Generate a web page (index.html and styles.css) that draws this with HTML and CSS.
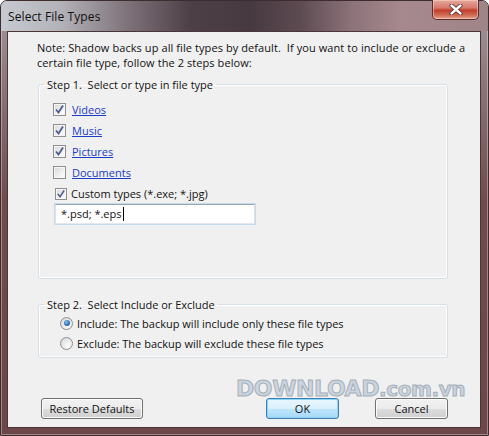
FILE: index.html
```html
<!DOCTYPE html>
<html>
<head>
<meta charset="utf-8">
<link rel="stylesheet" href="styles.css">
</head>
<body>
<div class="window">
  <div class="titlebar">
    <span class="title">Select File Types</span>
    <span class="close"><svg width="14" height="11" viewBox="0 0 14 11"><path d="M2.5 1.5 L11.5 9.5 M11.5 1.5 L2.5 9.5" stroke="#4a2a2a" stroke-width="4" stroke-linecap="round"/><path d="M2.5 1.5 L11.5 9.5 M11.5 1.5 L2.5 9.5" stroke="#fff" stroke-width="2.4" stroke-linecap="round"/></svg></span>
  </div>
  <div class="client">
    <p class="note">Note: Shadow backs up all file types by default.&nbsp; If you want to include or exclude a<br>certain file type, follow the 2 steps below:</p>
    <fieldset class="group group1">
      <legend>Step 1.&nbsp; Select or type in file type</legend>
      <div class="body1">
        <div class="row"><span class="cb"><svg width="11" height="11" viewBox="0 0 11 11"><path d="M2 5.5 L4.5 8.5 L9 1.5" fill="none" stroke="#4b5f8e" stroke-width="1.8"/></svg></span><a class="link">Videos</a></div>
        <div class="row"><span class="cb"><svg width="11" height="11" viewBox="0 0 11 11"><path d="M2 5.5 L4.5 8.5 L9 1.5" fill="none" stroke="#4b5f8e" stroke-width="1.8"/></svg></span><a class="link">Music</a></div>
        <div class="row"><span class="cb"><svg width="11" height="11" viewBox="0 0 11 11"><path d="M2 5.5 L4.5 8.5 L9 1.5" fill="none" stroke="#4b5f8e" stroke-width="1.8"/></svg></span><a class="link">Pictures</a></div>
        <div class="row"><span class="cb"></span><a class="link">Documents</a></div>
        <div class="row custom"><span class="cb small"><svg width="10" height="10" viewBox="0 0 11 11"><path d="M2 5.5 L4.5 8.5 L9 1.5" fill="none" stroke="#4b5f8e" stroke-width="1.8"/></svg></span><span>Custom types (*.exe; *.jpg)</span></div>
        <div class="input">*.psd; *.eps<span class="caret"></span></div>
      </div>
    </fieldset>
    <fieldset class="group group2">
      <legend>Step 2.&nbsp; Select Include or Exclude</legend>
      <div class="body2">
        <div class="rrow"><span class="radio on"></span><span>Include: The backup will include only these file types</span></div>
        <div class="rrow"><span class="radio"></span><span>Exclude: The backup will exclude these file types</span></div>
      </div>
    </fieldset>
    <div class="buttons">
      <button class="btn restore">Restore Defaults</button>
      <button class="btn ok">OK</button>
      <button class="btn cancel">Cancel</button>
    </div>
    <div class="watermark">DOWNLOAD<span class="wm-small">.com.vn</span></div>
  </div>
</div>
</body>
</html>
```
FILE: styles.css
```css
* { box-sizing: border-box; }
html, body { margin: 0; padding: 0; }
body {
  width: 489px;
  height: 436px;
  overflow: hidden;
  font-family: "Open Sans", "Noto Sans", sans-serif;
  font-size: 11px;
  color: #111;
  background: #fff;
}
.window {
  width: 489px;
  height: 436px;
  display: flex;
  flex-direction: column;
  border: 1px solid #3e2c2e;
  border-radius: 7px 7px 0 0;
  background: linear-gradient(to bottom, #a39aa0 0px, #8a7376 90px, #704b4e 200px, #6c4649 100%);
  box-shadow: inset 0 0 0 1px rgba(255,255,255,0.35);
}
.titlebar {
  height: 30px;
  flex: none;
  display: flex;
  align-items: flex-start;
  border-radius: 6px 6px 0 0;
  background: linear-gradient(to right, #c6cbd1 0px, #b3b2b8 60px, #7c6f77 130px, #4d3f46 190px, #463a40 250px, #5e4b52 300px, #8c7279 350px, #a6898e 400px, #9f8488 487px);
}
.title {
  margin: 8px 0 0 7px;
  font-size: 12px;
  line-height: 15px;
  color: #111;
  letter-spacing: 0.1px;
}
.close {
  margin: -1px 9px 0 auto;
  width: 47px;
  height: 20px;
  display: flex;
  align-items: center;
  justify-content: center;
  border: 1px solid #5b2f2f;
  border-top: none;
  border-radius: 0 0 5px 5px;
  background: linear-gradient(to bottom, #e5a89d 0%, #d87b6b 40%, #c2402c 55%, #cf6c55 80%, #e6a58f 100%);
  box-shadow: inset 0 0 0 1px rgba(255,220,210,0.5);
}
.close svg { display: block; }
.client {
  flex: 1;
  margin: 0 7px 7px 6px;
  border: 1px solid #4a3638;
  background: #f0f0f0;
  position: relative;
  display: flex;
  flex-direction: column;
}
.note {
  margin: 8px 0 0 29px;
  line-height: 15px;
  white-space: nowrap;
  letter-spacing: 0.08px;
}
.group {
  margin: 0 32px 0 30px;
  padding: 0;
  border: 1px solid #d5dfe5;
  border-radius: 3px;
  box-shadow: inset 0 0 0 1px #fff;
  min-width: 0;
}
.group legend {
  margin-left: 5px;
  padding: 0 3px;
  line-height: 15px;
  white-space: nowrap;
}
.group1 { margin-top: 7px; }
.body1 {
  height: 186px;
  padding: 7px 0 0 14px;
}
.row {
  height: 21px;
  display: flex;
  align-items: center;
}
.row .link {
  color: #1a3bc4;
  text-decoration: underline;
  margin-left: 6px;
}
.row.custom { padding-left: 2px; }
.row.custom span:last-child { margin-left: 4px; }
.cb {
  width: 13px;
  height: 13px;
  flex: none;
  border: 1px solid #8f8f8f;
  background: linear-gradient(135deg, #d8d8d8 0%, #f4f4f4 70%, #fff 100%);
  box-shadow: inset 0 0 0 1px #f6f6f6;
  display: flex;
  align-items: center;
  justify-content: center;
}
.cb.small { width: 12px; height: 12px; }
.input {
  margin: 0 0 0 2px;
  width: 200px;
  height: 20px;
  border: 1px solid #abadb3;
  border-top-color: #a0a4ad;
  border-right-color: #dbdfe6;
  border-bottom-color: #e3e9ef;
  border-left-color: #e2e3ea;
  background: #fff;
  padding: 0 0 0 5px;
  line-height: 18px;
  display: flex;
  align-items: center;
  box-shadow: 0 0 0 1px #c5daed;
}
.caret {
  display: inline-block;
  width: 1px;
  height: 14px;
  background: #000;
  margin-left: 1px;
}
.group2 { margin-top: 18px; }
.body2 { padding: 1px 0 4px 21px; }
.rrow {
  height: 20px;
  display: flex;
  align-items: center;
}
.rrow span:last-child { margin-left: 4px; }
.radio {
  width: 13px;
  height: 13px;
  flex: none;
  border-radius: 50%;
  border: 1px solid #8c8f93;
  background: radial-gradient(circle at 65% 70%, #fdfdfd 0%, #e6e6e6 55%, #cfd0d2 100%);
  display: flex;
  align-items: center;
  justify-content: center;
}
.radio.on::after {
  content: "";
  width: 6px;
  height: 6px;
  border-radius: 50%;
  background: radial-gradient(circle at 40% 35%, #8ec4f0 0%, #2a6bb0 60%, #1d4f8c 100%);
}
.buttons {
  margin-top: 40px;
  padding: 0 32px 0 33px;
  display: flex;
  gap: 36px;
}
.btn {
  height: 21px;
  font-family: inherit;
  font-size: 11px;
  color: #111;
  padding: 0;
  border: 1px solid #707070;
  border-radius: 3px;
  background: linear-gradient(to bottom, #f2f2f2 0%, #ebebeb 50%, #dddddd 51%, #cfcfcf 100%);
  box-shadow: inset 0 0 0 1px #fcfcfc;
}
.restore { width: 102px; margin-right: auto; }
.ok, .cancel { width: 73px; }
.ok {
  border-color: #3c7fb1;
  background: linear-gradient(to bottom, #eaf6fd 0%, #d9f0fc 50%, #bee6fd 51%, #a7d9f5 100%);
  box-shadow: inset 0 0 0 1px #8fd3f7;
}
.watermark {
  position: absolute;
  left: 228px;
  top: 348px;
  font-family: "DejaVu Sans", sans-serif;
  font-weight: bold;
  font-size: 22px;
  line-height: 17px;
  color: #c6d3df;
  opacity: 0.9;
  -webkit-text-stroke: 1px #9ea8b2;
  text-shadow: 0 0 2px #fff;
  letter-spacing: -0.4px;
  pointer-events: none;
  white-space: nowrap;
}
.wm-small { font-size: 20px; }
```
